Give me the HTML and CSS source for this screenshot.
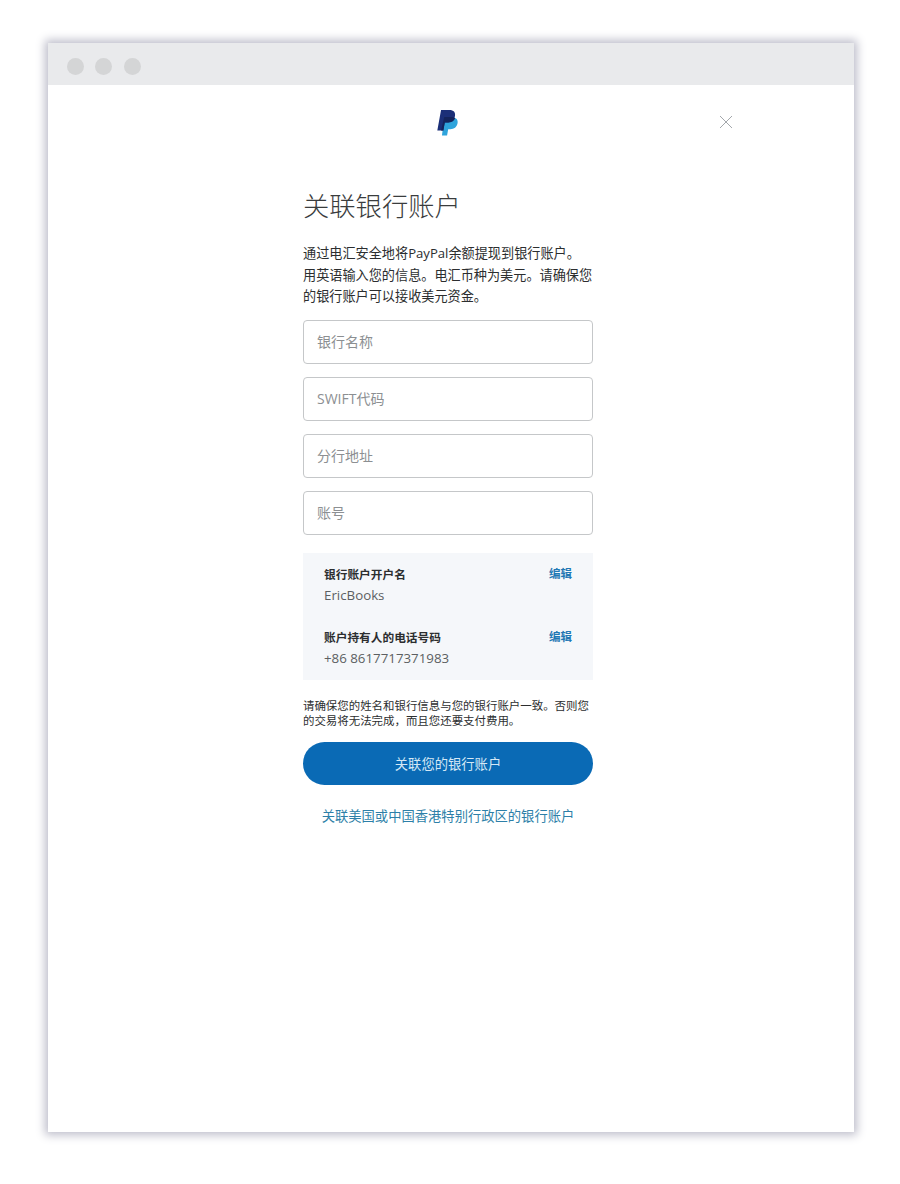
FILE: index.html
```html
<!DOCTYPE html>
<html lang="zh-CN">

<head>
    <meta charset="UTF-8">
    <meta name="viewport" content="width=device-width, initial-scale=1.0">
    <title>关联银行账户</title>
    <link rel="stylesheet" href="styles.css">
</head>

<body>
    <div class="browser">
        <div class="titlebar">
            <span class="dot"></span>
            <span class="dot"></span>
            <span class="dot"></span>
        </div>

        <div class="top">
            <svg class="logo" viewBox="0 0 24 28" width="24" height="26">
                <path fill="#2fa4dc" d="M8 8h9c4 0 6 2.500 5.300 6.300-.8 4.200-3.800 6.400-7.800 6.400h-2.300l-1.200 6.800H5.500z"/>
                <path fill="#1b2f78" d="M4.500 0h9c4.500 0 6.800 2.300 6 6.500-.8 4.600-4 7-8.500 7H8.500L7 22H.5z"/>
                <path fill="#14245c" d="M8 7.500h8.500c1.500.3 2.500.8 3.200 1.500-1 3-4 4.500-7.700 4.500H8.500L7 22H4.500z"/>
            </svg>
            <svg class="close" viewBox="0 0 14 14" width="14" height="14">
                <path d="M1 1l12 12M13 1L1 13" stroke="#a3a7ab" stroke-width="1" fill="none"/>
            </svg>
        </div>

        <div class="content">
            <h1>关联银行账户</h1>
            <p class="intro">通过电汇安全地将PayPal余额提现到银行账户。<br>用英语输入您的信息。电汇币种为美元。请确保您<br>的银行账户可以接收美元资金。</p>

            <input class="field" type="text" placeholder="银行名称">
            <input class="field" type="text" placeholder="SWIFT代码">
            <input class="field" type="text" placeholder="分行地址">
            <input class="field" type="text" placeholder="账号">

            <div class="details">
                <div class="detail-row">
                    <div>
                        <div class="detail-label">银行账户开户名</div>
                        <div class="detail-value">EricBooks</div>
                    </div>
                    <a class="edit" href="#">编辑</a>
                </div>
                <div class="detail-row">
                    <div>
                        <div class="detail-label">账户持有人的电话号码</div>
                        <div class="detail-value">+86 8617717371983</div>
                    </div>
                    <a class="edit" href="#">编辑</a>
                </div>
            </div>

            <p class="note">请确保您的姓名和银行信息与您的银行账户一致。否则您<br>的交易将无法完成，而且您还要支付费用。</p>

            <button class="submit">关联您的银行账户</button>
            <a class="other-link" href="#">关联美国或中国香港特别行政区的银行账户</a>
        </div>
    </div>
</body>

</html>
```

FILE: styles.css
```css
* {
    box-sizing: border-box;
}

body {
    margin: 0;
    padding: 43px 46px 52px 48px;
    background-color: #fff;
    font-family: "Open Sans", "Noto Sans CJK SC", sans-serif;
    color: #2c2e2f;
}

.browser {
    height: 1089px;
    background-color: #fff;
    box-shadow: 0 0 9px 3px #bdbdca;
}

.titlebar {
    display: flex;
    gap: 11.300px;
    align-items: center;
    height: 42px;
    padding: 4px 0 0 19px;
    background-color: #e9eaec;
}

.dot {
    width: 17px;
    height: 17px;
    border-radius: 50%;
    background-color: #d4d5d6;
}

.top {
    display: flex;
    align-items: center;
    height: 74px;
    padding: 2px 0 0 388px;
}

.close {
    margin: -2px 0 0 259px;
}

.content {
    width: 290px;
    margin-left: 255px;
}

h1 {
    margin: 0;
    padding-top: 27px;
    font-family: "Noto Sans CJK SC", sans-serif;
    font-size: 26.300px;
    line-height: 38px;
    font-weight: 300;
    color: #3a3c3d;
}

.intro {
    margin: 19px 0 12px;
    font-size: 13.150px;
    line-height: 21.500px;
    white-space: nowrap;
    color: #2c2e2f;
}

.field {
    display: block;
    width: 100%;
    height: 44px;
    margin-bottom: 13px;
    padding: 0 13px;
    border: 1.500px solid #c5c7c9;
    border-radius: 4px;
    font-family: inherit;
    font-size: 14px;
    outline: none;
}

.field::placeholder {
    color: #8c8f92;
}

.details {
    height: 127px;
    margin-top: 18px;
    padding: 11px 21px 0;
    background-color: #f5f7fa;
}

.detail-row {
    display: flex;
    justify-content: space-between;
    height: 63px;
}

.detail-label {
    font-size: 11.700px;
    line-height: 20px;
    font-weight: 700;
    color: #2c2e2f;
}

.detail-value {
    margin-top: 1px;
    font-size: 13.300px;
    line-height: 20px;
    color: #5c5f62;
}

.edit {
    font-size: 11.500px;
    line-height: 20px;
    font-weight: 700;
    color: #1f78b4;
    text-decoration: none;
}

.note {
    margin: 18px 0 14px;
    font-size: 11.450px;
    line-height: 15px;
    white-space: nowrap;
    color: #2c2e2f;
}

.submit {
    display: block;
    width: 100%;
    height: 43px;
    border: none;
    border-radius: 22px;
    background-color: #0a6ab5;
    color: #d5e8f5;
    font-family: inherit;
    font-size: 13.300px;
}

.other-link {
    display: block;
    margin-top: 21px;
    text-align: center;
    font-size: 13.300px;
    line-height: 20px;
    color: #2d7fa8;
    text-decoration: none;
}
```
